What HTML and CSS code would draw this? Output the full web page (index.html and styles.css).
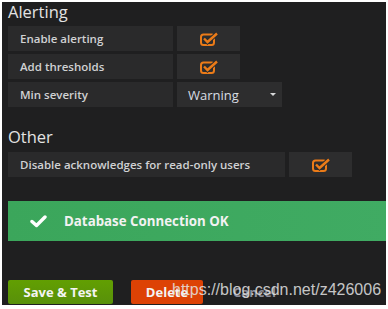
FILE: index.html
```html
<!DOCTYPE html>
<html>
<head>
<meta charset="utf-8">
<link rel="stylesheet" href="styles.css">
</head>
<body>
<div class="page">
  <h3 class="section-title">Alerting</h3>
  <div class="form-row">
    <span class="label w165">Enable alerting</span>
    <span class="check-cell"><svg class="chk" width="19" height="14" viewBox="0 0 19 14"><rect x="1" y="2.5" width="13" height="10.5" rx="2.5" fill="none" stroke="#eb7b18" stroke-width="2"/><path d="M4 6.5 L7.5 10 L17 1.5" fill="none" stroke="#2d2d2e" stroke-width="4.5"/><path d="M4 6.5 L7.5 10 L17 1.5" fill="none" stroke="#eb7b18" stroke-width="2.4"/></svg></span>
  </div>
  <div class="form-row">
    <span class="label w165">Add thresholds</span>
    <span class="check-cell"><svg class="chk" width="19" height="14" viewBox="0 0 19 14"><rect x="1" y="2.5" width="13" height="10.5" rx="2.5" fill="none" stroke="#eb7b18" stroke-width="2"/><path d="M4 6.5 L7.5 10 L17 1.5" fill="none" stroke="#2d2d2e" stroke-width="4.5"/><path d="M4 6.5 L7.5 10 L17 1.5" fill="none" stroke="#eb7b18" stroke-width="2.4"/></svg></span>
  </div>
  <div class="form-row">
    <span class="label w165">Min severity</span>
    <span class="select">Warning<span class="caret"></span></span>
  </div>

  <h3 class="section-title other">Other</h3>
  <div class="form-row">
    <span class="label w277">Disable acknowledges for read-only users</span>
    <span class="check-cell"><svg class="chk" width="19" height="14" viewBox="0 0 19 14"><rect x="1" y="2.5" width="13" height="10.5" rx="2.5" fill="none" stroke="#eb7b18" stroke-width="2"/><path d="M4 6.5 L7.5 10 L17 1.5" fill="none" stroke="#2d2d2e" stroke-width="4.5"/><path d="M4 6.5 L7.5 10 L17 1.5" fill="none" stroke="#eb7b18" stroke-width="2.4"/></svg></span>
  </div>

  <div class="alert">
    <svg class="ok" width="17" height="13" viewBox="0 0 17 13"><path d="M2 6.5 L6.5 10.5 L15 2" fill="none" stroke="#ffffff" stroke-width="3.4" stroke-linecap="round" stroke-linejoin="round"/></svg>
    <span class="alert-text">Database Connection OK</span>
  </div>

  <div class="buttons">
    <span class="btn btn-success">Save &amp; Test</span>
    <span class="btn btn-danger">Delete</span>
    <span class="btn-link">Cancel</span>
  </div>
  <div class="watermark">https://blog.csdn.net/z426006</div>
</div>
</body>
</html>
```
FILE: styles.css
```css
html, body {
  margin: 0;
  padding: 0;
  background: #ffffff;
}
.page {
  position: relative;
  margin: 2px 2px 0 2px;
  height: 303px;
  background: #1f1f20;
  padding-left: 6px;
  box-sizing: border-box;
  overflow: hidden;
  font-family: "Open Sans", "Liberation Sans", sans-serif;
  color: #d8d9da;
}
.section-title {
  margin: 0 0 4px 0;
  font-size: 16.5px;
  line-height: 20px;
  font-weight: 400;
  color: #e3e3e3;
}
.section-title.other {
  margin-top: 20px;
  margin-bottom: 5px;
}
.form-row {
  display: flex;
  gap: 4px;
  height: 25px;
  margin-bottom: 3px;
}
.label {
  display: flex;
  align-items: center;
  box-sizing: border-box;
  padding-left: 12px;
  background: #2a2a2b;
  font-size: 11.5px;
  font-weight: 600;
  color: #d0d1d3;
}
.w165 { width: 165px; }
.w277 { width: 277px; }
.check-cell {
  display: flex;
  align-items: center;
  justify-content: center;
  width: 63px;
  background: #2d2d2e;
}
.chk { margin-left: 1px; }
.select {
  display: flex;
  align-items: center;
  box-sizing: border-box;
  width: 105px;
  padding-left: 11px;
  background: #2d2d2e;
  font-size: 13px;
  color: #d8dde3;
  position: relative;
}
.caret {
  margin-left: auto;
  margin-right: 6px;
  width: 0;
  height: 0;
  border-left: 3px solid transparent;
  border-right: 3px solid transparent;
  border-top: 3px solid #d8d9da;
}
.alert {
  display: flex;
  align-items: center;
  height: 40px;
  margin-top: 24px;
  margin-right: -4px;
  background: linear-gradient(90deg, #3ba65b, #40ab63);
  padding-left: 22px;
}
.ok { margin-right: 17px; }
.alert-text {
  font-size: 13.3px;
  font-weight: 700;
  color: #f2f2f2;
}
.buttons {
  display: flex;
  align-items: center;
  margin-top: 39px;
}
.btn {
  display: flex;
  align-items: center;
  justify-content: center;
  height: 24px;
  box-sizing: border-box;
  font-size: 13px;
  font-weight: 700;
  color: #f4f4f4;
  border-radius: 2px;
}
.btn-success {
  width: 105px;
  background: linear-gradient(180deg, #629f02, #58900a);
}
.btn-danger {
  width: 72px;
  margin-left: 18px;
  background: #dd4205;
}
.btn-link {
  margin-left: 30px;
  font-size: 13px;
  font-weight: 700;
  color: #8e8e9a;
}
.watermark {
  position: absolute;
  left: 170px;
  top: 279px;
  font-family: "Liberation Sans", Arial, sans-serif;
  font-size: 16px;
  color: rgba(230, 230, 230, 0.85);
  white-space: nowrap;
}
```
